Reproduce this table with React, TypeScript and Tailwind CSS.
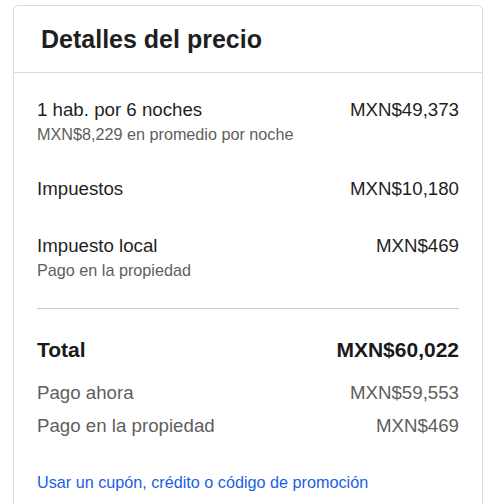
const rows = [
  { label: "1 hab. por 6 noches", amount: "MXN$49,373", sub: "MXN$8,229 en promedio por noche" },
  { label: "Impuestos", amount: "MXN$10,180" },
  { label: "Impuesto local", amount: "MXN$469", sub: "Pago en la propiedad" },
];

const App = () => {
  return (
    <div className="min-h-screen bg-white pt-[5px] pl-[13px] font-['Liberation_Sans',Arial,sans-serif]">
      <div className="w-[470px] h-[520px] rounded-t-[5px] border border-[#dcdcdc] bg-white">
        <div className="h-[67px] border-b border-[#dcdcdc] pl-[27px] flex items-center">
          <h2 className="text-[25px] font-bold text-[#1f1f1f] leading-none">Detalles del precio</h2>
        </div>
        <div className="px-[23px] pt-[25px]">
          {rows.map((row, i) => (
            <div key={row.label} className={i === 0 ? "" : "mt-[33px]"}>
              <div className="flex justify-between text-[18.7px] leading-6 text-[#1f1f1f]">
                <span>{row.label}</span>
                <span>{row.amount}</span>
              </div>
              {row.sub && (
                <div className="mt-[2px] text-[16.2px] leading-5 text-[#5e5e5e]">{row.sub}</div>
              )}
            </div>
          ))}
          <div className="mt-[28px] h-px bg-[#cccccc]" />
          <div className="mt-[29px] flex justify-between text-[21px] leading-6 font-bold text-[#1a1a1a]">
            <span>Total</span>
            <span>MXN$60,022</span>
          </div>
          <div className="mt-[19px] flex justify-between text-[18.7px] leading-6 text-[#5e5e5e]">
            <span>Pago ahora</span>
            <span>MXN$59,553</span>
          </div>
          <div className="mt-[9px] flex justify-between text-[18.7px] leading-6 text-[#5e5e5e]">
            <span>Pago en la propiedad</span>
            <span>MXN$469</span>
          </div>
          <div className="mt-[34px] text-[16.2px] leading-5">
            <a href="#" className="text-[#1a5ee8]">
              Usar un cupón, crédito o código de promoción
            </a>
          </div>
        </div>
      </div>
    </div>
  );
};

export default App;
